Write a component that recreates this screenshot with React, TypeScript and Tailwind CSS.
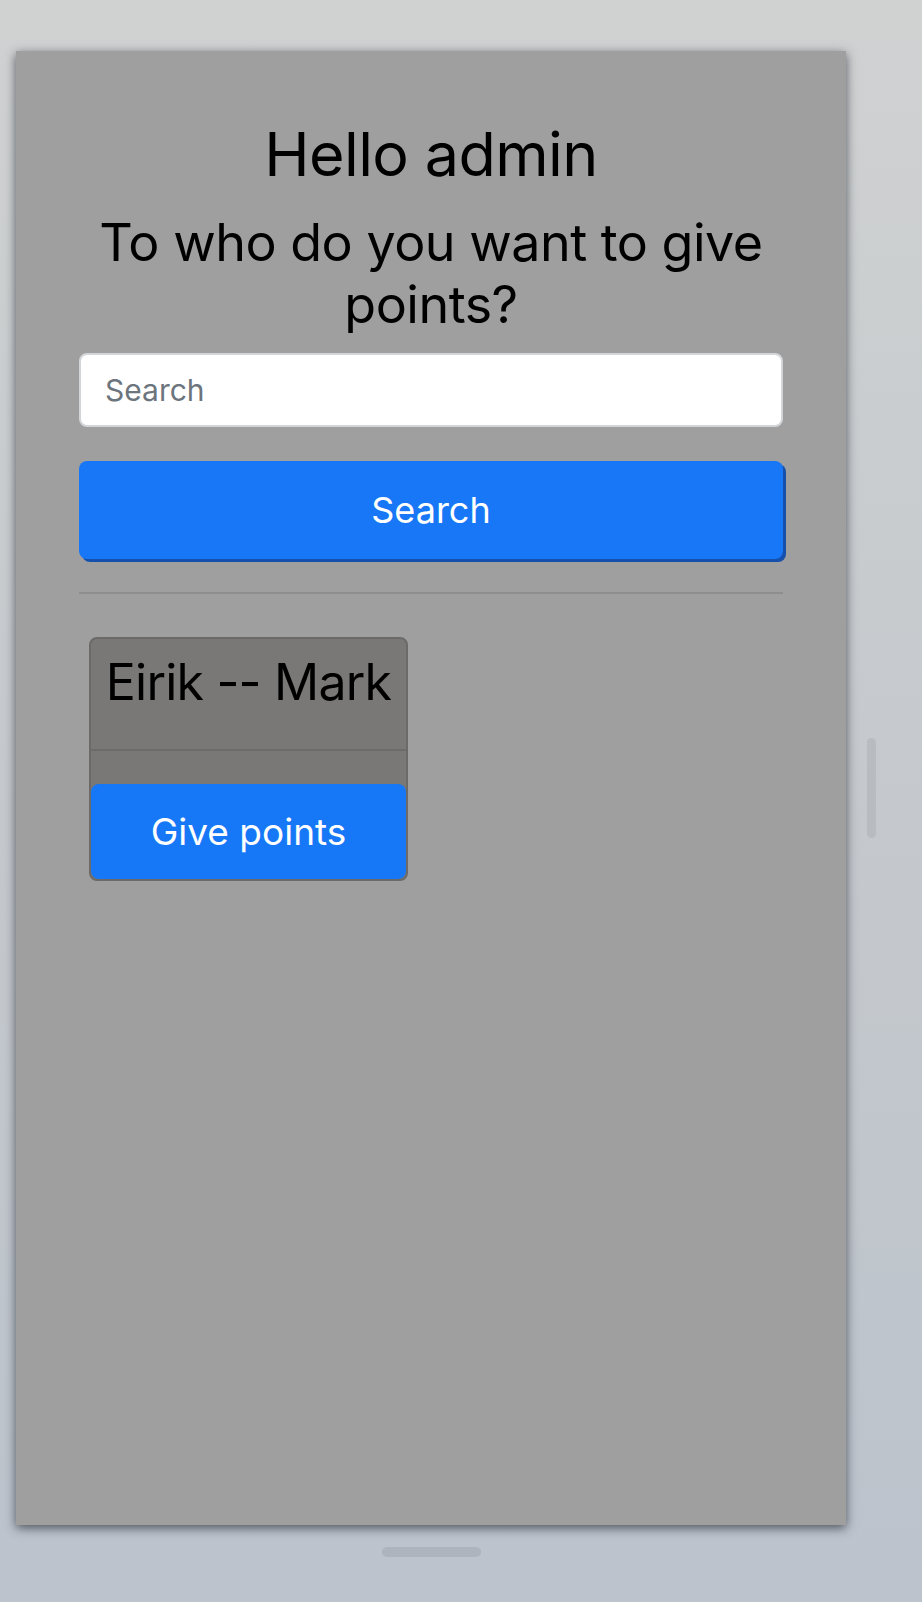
import { useState } from 'react';

const font = { fontFamily: 'Inter, "Liberation Sans", sans-serif' };

const App = () => {
  const [query, setQuery] = useState('');

  return (
    <div
      className="min-h-[1602px] w-full bg-gradient-to-b from-[#d0d2d2] via-[#c5c9cd] to-[#bcc3cc] flex flex-col"
      style={font}
    >
      <div className="flex flex-row items-start pt-[51px] pl-[16px]">
        {/* Phone screen */}
        <div className="w-[830px] h-[1474px] bg-[#9f9f9f] shadow-[0_3px_10px_rgba(30,35,45,0.7)] flex flex-col pt-[66px] px-[63px]">
          <h1 className="text-center text-black text-[61px] leading-[75px] tracking-[-0.6px] mb-[20px]">Hello admin</h1>
          <h2 className="text-center text-black text-[52px] leading-[62px] tracking-[-0.5px] mb-[17px]">
            To who do you want to give points?
          </h2>

          <input
            value={query}
            onChange={(e) => setQuery(e.target.value)}
            placeholder="Search"
            className="h-[74px] w-full rounded-[8px] border-2 border-[#d3d6d9] bg-white px-[24px] text-[30px] text-[#495057] placeholder:text-[#6c757d] outline-none"
          />

          <button className="mt-[34px] h-[98px] w-full rounded-[8px] bg-[#1877f6] text-white text-[36px] shadow-[3px_3px_0_#1650ad]">
            Search
          </button>

          <hr className="mt-[33px] border-0 h-[2px] bg-[#8e8e8e]" />

          {/* Result card */}
          <div className="mt-[43px] ml-[10px] w-[319px] h-[244px] rounded-[8px] border-2 border-[#6b6a69] bg-[#797877] flex flex-col overflow-hidden">
            <div className="h-[112px] pt-[12px] text-center text-black text-[50px] leading-[62px] tracking-[-0.8px] border-b-2 border-[#6c6b6a]">
              Eirik -- Mark
            </div>
            <div className="flex-1 flex flex-col justify-end">
              <button className="h-[95px] w-full rounded-[8px] bg-[#1677f7] text-white text-[37px]">
                Give points
              </button>
            </div>
          </div>
        </div>

        {/* Scroll indicator */}
        <div className="ml-[21px] mt-[687px] w-[9px] h-[100px] rounded-full bg-[#b8bcc1]" />
      </div>

      {/* Home handle */}
      <div className="ml-[16px] w-[830px] flex justify-center mt-[22px]">
        <div className="w-[99px] h-[10px] rounded-full bg-[#aeb4bd]" />
      </div>
    </div>
  );
};

export default App;
